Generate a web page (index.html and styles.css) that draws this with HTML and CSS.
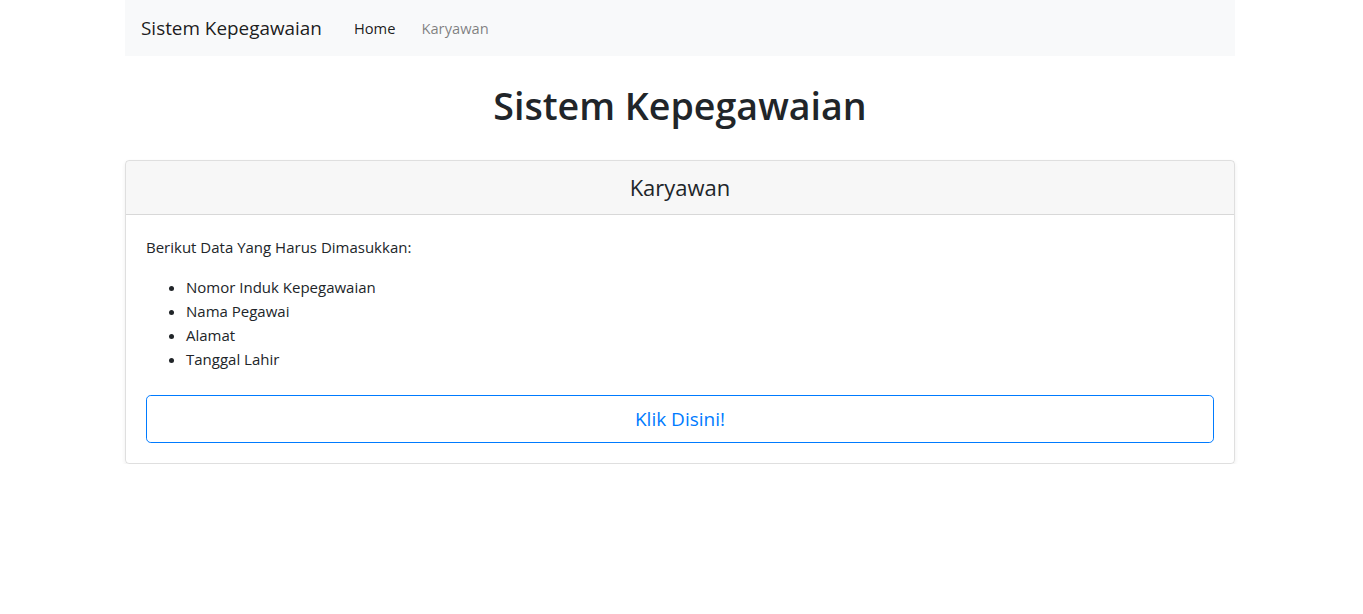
FILE: index.html
```html
<!DOCTYPE html>
<html lang="id">
<head>
<meta charset="utf-8">
<title>Sistem Kepegawaian</title>
<link rel="stylesheet" href="styles.css">
</head>
<body>
<div class="page">
  <nav class="navbar">
    <a class="brand" href="#">Sistem Kepegawaian</a>
    <ul class="nav">
      <li><a class="nav-link active" href="#">Home</a></li>
      <li><a class="nav-link" href="#">Karyawan</a></li>
    </ul>
  </nav>
  <h1 class="title">Sistem Kepegawaian</h1>
  <div class="card">
    <div class="card-header"><h4>Karyawan</h4></div>
    <div class="card-body">
      <p>Berikut Data Yang Harus Dimasukkan:</p>
      <ul class="list">
        <li>Nomor Induk Kepegawaian</li>
        <li>Nama Pegawai</li>
        <li>Alamat</li>
        <li>Tanggal Lahir</li>
      </ul>
      <a class="btn" href="#">Klik Disini!</a>
    </div>
  </div>
</div>
</body>
</html>
```
FILE: styles.css
```css
* { box-sizing: border-box; }
html, body { margin: 0; }
body {
  padding-right: 3px;
  font-family: "Open Sans", "Noto Sans", "Liberation Sans", sans-serif;
  font-size: 16px;
  line-height: 1.5;
  color: #212529;
  background: #fff;
}
.page {
  width: 1110px;
  margin: 0 auto;
}
.navbar {
  display: flex;
  align-items: center;
  height: 56px;
  padding: 8px 16px;
  background: #f8f9fa;
}
.brand {
  font-size: 18.9px;
  line-height: 30px;
  color: rgba(0,0,0,.9);
  text-decoration: none;
  margin-right: 19px;
}
.nav {
  display: flex;
  list-style: none;
  margin: 0;
  padding: 0;
}
.nav-link {
  display: block;
  padding: 8px 13px;
  font-size: 14.7px;
  line-height: 24px;
  color: rgba(0,0,0,.5);
  text-decoration: none;
}
.nav-link.active { color: rgba(0,0,0,.9); }
.title {
  margin: 26px 0 30px;
  text-align: center;
  font-size: 37.6px;
  line-height: 48px;
  font-weight: 600;
}
.card {
  border: 1px solid rgba(0,0,0,.125);
  border-radius: 4px;
  box-shadow: 0 2px 4px rgba(0,0,0,.07);
  overflow: hidden;
}
.card-header {
  padding: 12px 20px;
  background: rgba(0,0,0,.03);
  border-bottom: 1px solid rgba(0,0,0,.125);
  text-align: center;
}
.card-header h4 {
  margin: 0;
  font-size: 22px;
  line-height: 28.8px;
  font-weight: 400;
}
.card-body { padding: 20px; }
.card-body p {
  margin: 0 0 16px;
  font-size: 15px;
  line-height: 24px;
}
.list {
  margin: 0 0 24px;
  padding-left: 40px;
  font-size: 15px;
  line-height: 24px;
}
.btn {
  display: block;
  width: 100%;
  padding: 8px 16px;
  font-size: 19px;
  line-height: 30px;
  text-align: center;
  color: #007bff;
  border: 1px solid #007bff;
  border-radius: 4.8px;
  text-decoration: none;
}
```
